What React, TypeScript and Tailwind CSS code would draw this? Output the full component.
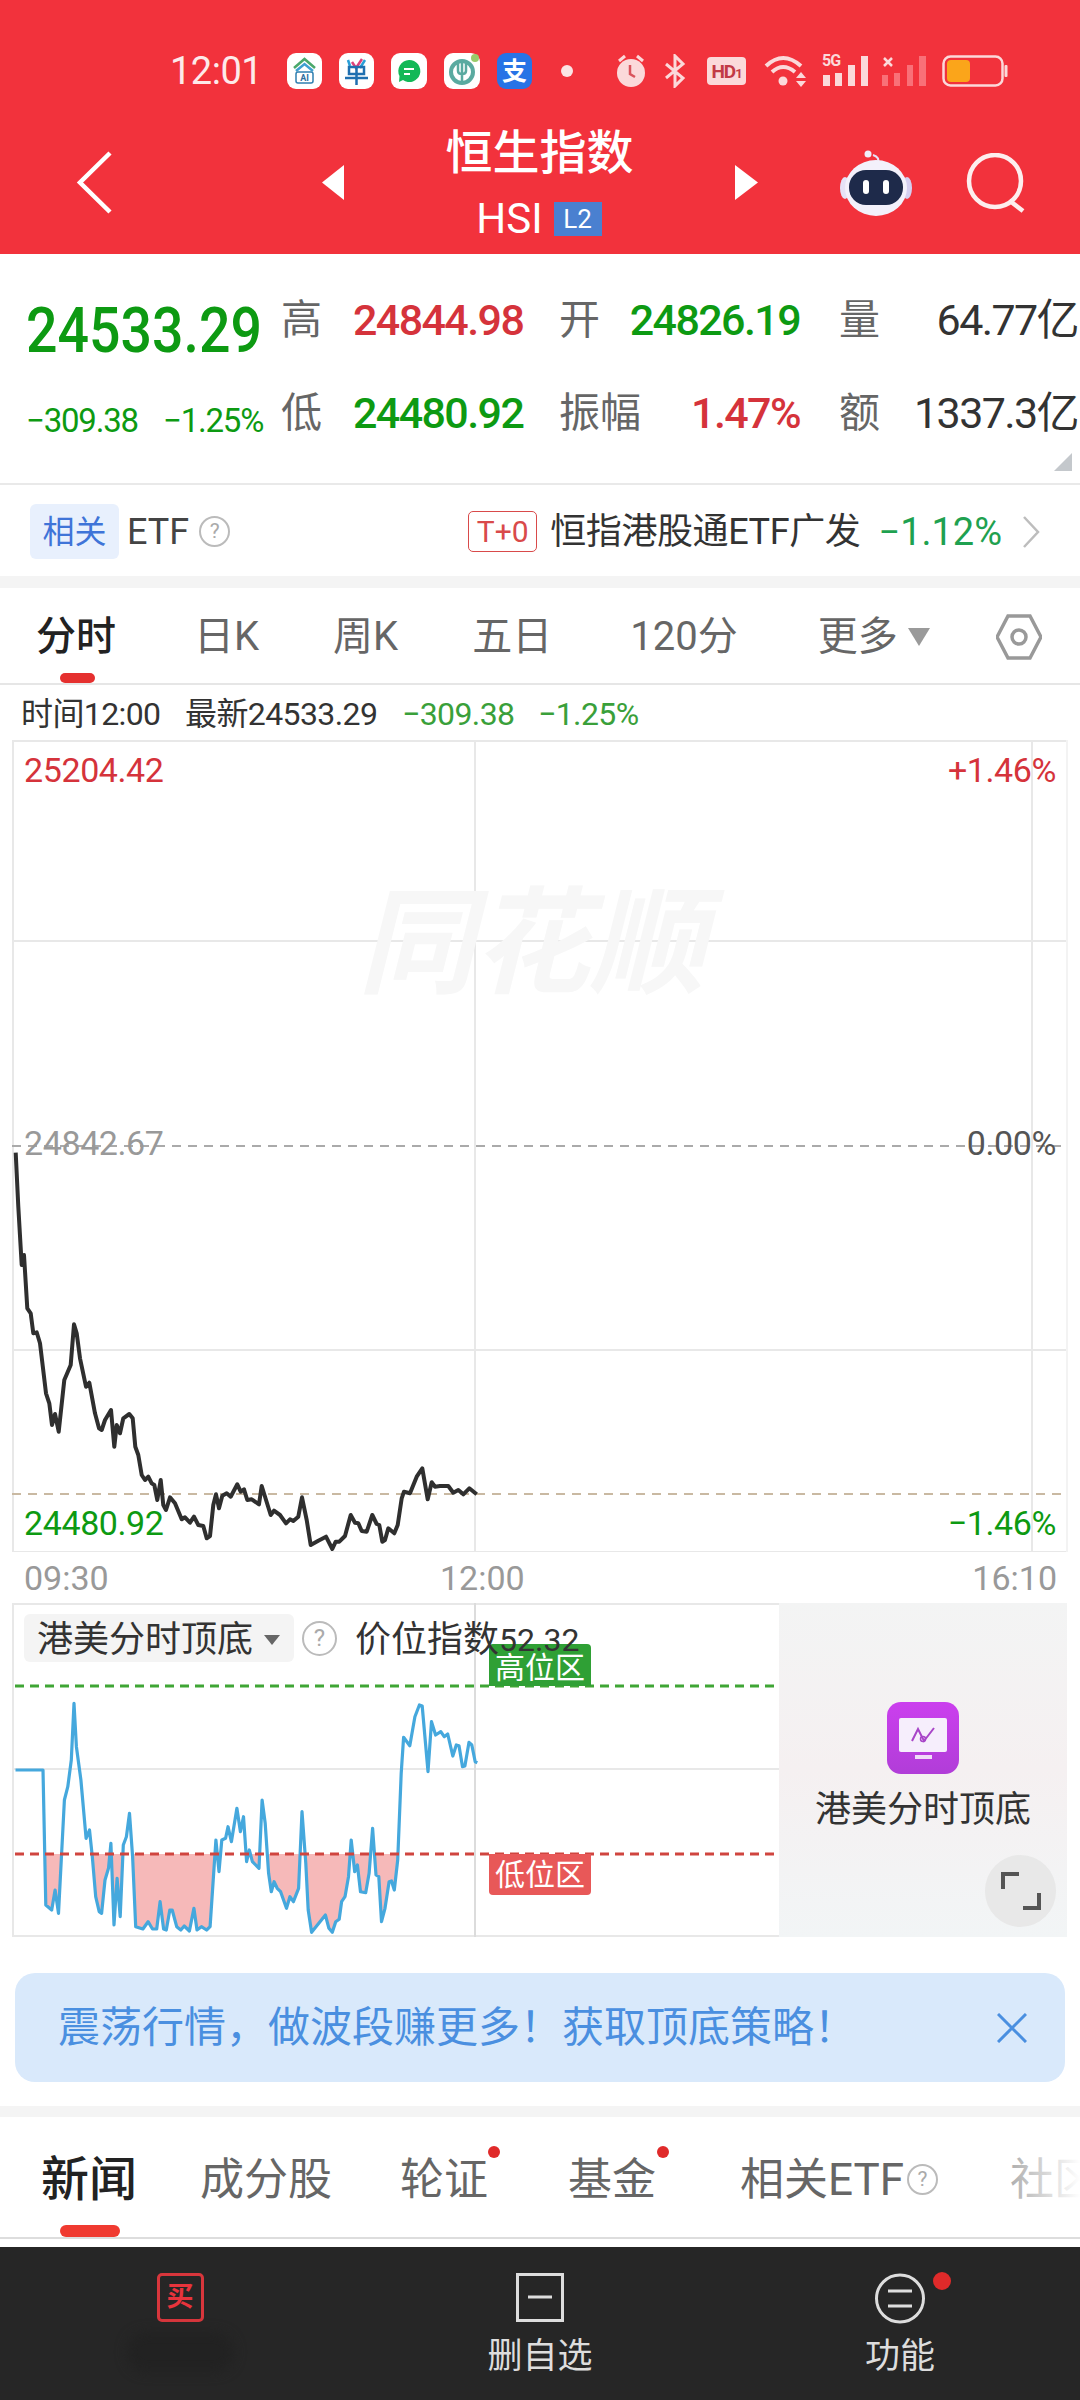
const pricePts = [
  [47,158],[55,320],[65,495],[72,465],[82,625],[92,640],[100,700],[110,697],[120,730],[138,880],[148,910],[156,975],[165,942],[176,995],[193,840],[212,795],[222,673],[230,700],[240,775],[258,860],[268,848],[285,940],[297,985],[305,990],[315,960],[333,930],[343,1040],[350,975],[360,1000],[370,955],[388,942],[398,955],[406,1040],[415,1065],[425,1125],[435,1140],[445,1130],[455,1150],[463,1155],[472,1200],[482,1140],[490,1215],[498,1230],[510,1192],[525,1210],[545,1258],[555,1252],[570,1268],[582,1250],[595,1275],[610,1278],[620,1315],[630,1308],[640,1215],[648,1183],[657,1225],[667,1187],[680,1180],[692,1190],[712,1153],[722,1175],[732,1168],[742,1200],[755,1198],[777,1213],[785,1158],[812,1245],[822,1232],[840,1245],[858,1270],[870,1258],[880,1263],[895,1250],[906,1192],[920,1260],[932,1335],[955,1322],[978,1310],[997,1347],[1007,1325],[1018,1325],[1035,1308],[1052,1245],[1065,1268],[1075,1270],[1085,1293],[1100,1295],[1117,1245],[1130,1272],[1138,1275],[1147,1325],[1155,1320],[1165,1285],[1183,1300],[1193,1275],[1205,1195],[1212,1175],[1230,1180],[1250,1130],[1267,1105],[1283,1198],[1295,1147],[1305,1160],[1320,1158],[1345,1158],[1360,1178],[1375,1170],[1390,1183],[1408,1165],[1430,1183],
];

const indexPts = [
  [45,570],[125,570],[133,975],[150,990],[160,930],[170,1000],[187,660],[197,620],[207,540],[215,370],[222,500],[235,600],[250,775],[260,750],[268,830],[278,950],[288,995],[295,1000],[305,900],[315,865],[322,790],[331,1035],[340,895],[349,1010],[358,795],[367,770],[376,700],[385,830],[394,1040],[415,1047],[430,1025],[443,1047],[455,1047],[465,965],[475,1047],[483,1050],[493,990],[500,990],[513,1040],[525,1050],[535,1038],[550,1053],[563,985],[572,1050],[585,1040],[600,1050],[610,1040],[627,780],[636,875],[644,780],[655,775],[662,740],[672,785],[688,685],[698,755],[707,710],[716,845],[724,810],[733,845],[752,865],[761,660],[770,730],[780,880],[788,935],[796,905],[805,925],[815,935],[832,985],[842,950],[852,965],[867,925],[877,695],[888,850],[895,990],[905,1057],[945,1005],[955,1045],[965,1057],[975,1025],[985,1018],[992,965],[1002,950],[1012,890],[1020,780],[1030,875],[1038,855],[1047,935],[1062,938],[1072,880],[1082,745],[1092,885],[1100,890],[1108,1025],[1118,985],[1130,905],[1137,903],[1145,930],[1155,840],[1165,580],[1172,472],[1190,497],[1205,410],[1218,375],[1226,378],[1243,575],[1253,425],[1265,465],[1280,455],[1290,470],[1300,462],[1315,528],[1325,495],[1333,497],[1343,560],[1350,558],[1362,487],[1370,495],[1380,545],[1386,548],
];

const priceLine = pricePts.map(([x, y]) => `${(x / 3).toFixed(1)},${(y / 3 + 1100).toFixed(1)}`).join(' ');
const indexXY = indexPts.map(([x, y]) => [+(x / 2.904).toFixed(1), +(y / 3 + 1580).toFixed(1)]);
const indexLine = indexXY.map(([x, y]) => `${x},${y}`).join(' ');
const indexFill = `${indexLine} ${indexXY[indexXY.length - 1][0]},1854 ${indexXY[0][0]},1854`;

function AppIcons() {
  return (
    <div className="flex items-center gap-[17px] ml-[27px]">
      <svg width="35" height="36" viewBox="0 0 35 36">
        <rect width="35" height="36" rx="9" fill="#fff" />
        <path d="M7 15 L17.5 6 L28 15" fill="none" stroke="#4aa86a" strokeWidth="2.5" />
        <path d="M9 18 L17.5 11 L26 18" fill="none" stroke="#3f9fd0" strokeWidth="2.5" />
        <rect x="9" y="19" width="17" height="11" rx="2" fill="none" stroke="#2f7fb0" strokeWidth="1.5" />
        <text x="17.5" y="28" textAnchor="middle" fontSize="9" fontWeight="700" fill="#2f6f9f">AI</text>
      </svg>
      <svg width="35" height="36" viewBox="0 0 35 36">
        <rect width="35" height="36" rx="9" fill="#fff" />
        <path d="M9 7 L11 13 M26 7 L21 15" stroke="#2a9fd8" strokeWidth="2.5" fill="none" />
        <path d="M13 9 L17 15 L23 6" stroke="#e0407a" strokeWidth="2.5" fill="none" />
        <path d="M10 14 H25 V21 H10 Z M6 25 H29 M17.5 14 V32" stroke="#1f6fb0" strokeWidth="2.5" fill="none" />
      </svg>
      <svg width="36" height="36" viewBox="0 0 36 36">
        <rect width="36" height="36" rx="9" fill="#fff" />
        <path d="M18 7 A11 11 0 1 1 12 27 L8 29 L8.5 23 A11 11 0 0 1 18 7 Z" fill="#12b857" />
        <path d="M13 16 H23 M13 21 H19" stroke="#fff" strokeWidth="2.2" />
      </svg>
      <svg width="36" height="36" viewBox="0 0 36 36">
        <rect width="36" height="36" rx="9" fill="#fff" />
        <circle cx="18" cy="19" r="11" fill="none" stroke="#5aaaa0" strokeWidth="4" />
        <path d="M14 8 V18 Q14 21 18 21 Q22 21 22 18 V8 M18 8 V30" fill="none" stroke="#5aaaa0" strokeWidth="2.5" />
        <circle cx="31" cy="5" r="4" fill="#9acb6a" />
      </svg>
      <div className="w-[35px] h-[36px] rounded-[9px] bg-[#2773e6] flex items-center justify-center text-white text-[25px] font-bold leading-none">
        支
      </div>
    </div>
  );
}

function SystemIcons() {
  const c = '#fbd9da';
  return (
    <div className="flex items-center">
      <div className="w-[12px] h-[12px] rounded-full bg-[#fbe4e4] ml-[29px]" />
      <svg className="ml-[42px]" width="32" height="34" viewBox="0 0 32 34">
        <circle cx="16" cy="19" r="14" fill={c} />
        <path d="M4 7 L10 2 M28 7 L22 2" stroke={c} strokeWidth="3" />
        <path d="M15 11 V20 L20 23" stroke="#d9545c" strokeWidth="2.5" fill="none" />
      </svg>
      <svg className="ml-[17px]" width="22" height="34" viewBox="0 0 22 34">
        <path d="M2 10 L19 24 L11 32 V2 L19 10 L2 24" fill="none" stroke={c} strokeWidth="3" />
      </svg>
      <div className="ml-[21px] w-[39px] h-[28px] rounded-[4px] bg-[#fbd9da] flex items-center justify-center text-[#c23a45] text-[19px] font-bold leading-none tracking-[-1px]">
        HD<span className="text-[13px] mt-[5px]">1</span>
      </div>
      <svg className="ml-[18px]" width="44" height="32" viewBox="0 0 44 32">
        <path d="M2 11 Q19 -5 37 11" fill="none" stroke={c} strokeWidth="4" />
        <path d="M8 17 Q19 7 31 17" fill="none" stroke={c} strokeWidth="4" />
        <circle cx="19" cy="26" r="4.5" fill={c} />
        <path d="M37 17 L42 23 H32 Z M32 26 H42 L37 32 Z" fill={c} />
      </svg>
      <div className="ml-[14px] relative w-[46px] h-[32px]">
        <span className="absolute left-0 top-[-2px] text-[16px] font-bold leading-none text-[#fbd9da] tracking-[-1px]">5G</span>
        <svg className="absolute inset-0" width="46" height="32" viewBox="0 0 46 32">
          <rect x="1" y="20" width="7" height="11" fill={c} />
          <rect x="13" y="18" width="7" height="13" fill={c} />
          <rect x="26" y="10" width="7" height="21" fill={c} />
          <rect x="39" y="1" width="7" height="30" fill={c} />
        </svg>
      </div>
      <svg className="ml-[14px]" width="44" height="32" viewBox="0 0 44 32">
        <path d="M2 3 L10 11 M10 3 L2 11" stroke={c} strokeWidth="2.5" />
        <g fill="#f97078">
          <rect x="0" y="20" width="6" height="11" />
          <rect x="12" y="18" width="6" height="13" />
          <rect x="25" y="10" width="6" height="21" />
          <rect x="37" y="1" width="7" height="30" />
        </g>
      </svg>
      <svg className="ml-[16px]" width="66" height="32" viewBox="0 0 66 32">
        <rect x="1.5" y="1.5" width="59" height="29" rx="7" fill="none" stroke={c} strokeWidth="2.5" />
        <rect x="5" y="5" width="23" height="22" rx="4" fill="#fba51a" />
        <rect x="62.5" y="10" width="3" height="12" rx="1" fill={c} />
      </svg>
    </div>
  );
}

function RobotIcon() {
  return (
    <svg width="72" height="66" viewBox="0 0 72 66">
      <path d="M38 14 Q40 7 33 5" fill="none" stroke="#e6e2f6" strokeWidth="2" />
      <circle cx="28" cy="4" r="3.5" fill="#f0eefa" />
      <ellipse cx="5" cy="38" rx="5" ry="11" fill="#e6e2f6" />
      <ellipse cx="67" cy="38" rx="5" ry="11" fill="#d5cff0" />
      <ellipse cx="36" cy="38" rx="31" ry="28" fill="#f3f1fb" />
      <rect x="9" y="20" width="54" height="35" rx="17" fill="#1e2a4a" />
      <rect x="23" y="30" width="6" height="14" rx="3" fill="#fff" />
      <rect x="43" y="30" width="6" height="14" rx="3" fill="#fff" />
    </svg>
  );
}

function Header() {
  return (
    <div className="h-[254px] bg-[#f2323c] flex flex-col shrink-0 text-white">
      <div className="flex items-center mt-[53px] h-[36px] pl-[170px]">
        <span className="text-[38px] leading-none text-[#fdeaea] w-[90px] tracking-[-0.5px]">12:01</span>
        <AppIcons />
        <SystemIcons />
      </div>
      <div className="flex items-center mt-[36px] h-[115px] pl-[76px]">
        <svg width="36" height="63" viewBox="0 0 36 63">
          <path d="M34 2 L4 31.5 L34 61" fill="none" stroke="#fff" strokeWidth="4.5" />
        </svg>
        <svg className="ml-[210px]" width="22" height="35" viewBox="0 0 22 35">
          <path d="M22 0 V35 L0 17.5 Z" fill="#fff" />
        </svg>
        <div className="w-[391px] flex flex-col items-center">
          <span className="text-[47px] leading-none font-medium mt-[3px]">恒生指数</span>
          <div className="flex items-center mt-[22px] pr-[1px]">
            <span className="text-[42px] leading-none">HSI</span>
            <span className="ml-[11px] w-[48px] h-[34px] bg-[#4a80d0] text-[26px] leading-none flex items-center justify-center">L2</span>
          </div>
        </div>
        <svg width="23" height="35" viewBox="0 0 23 35">
          <path d="M0 0 V35 L23 17.5 Z" fill="#fff" />
        </svg>
        <div className="ml-[82px]">
          <RobotIcon />
        </div>
        <svg className="ml-[54px]" width="62" height="60" viewBox="0 0 62 60">
          <circle cx="29" cy="28" r="26" fill="none" stroke="#fdeeee" strokeWidth="4.5" />
          <path d="M44 48 L57 58" stroke="#fdeeee" strokeWidth="4.5" />
        </svg>
      </div>
    </div>
  );
}

const numCls = 'text-[43px] leading-none tracking-[-1.6px] font-medium';
const labelCls = 'text-[41px] leading-none text-[#666]';

function Stats() {
  return (
    <div className="h-[231px] shrink-0 relative pl-[26px] border-b-2 border-[#e9e9e9]">
      <div className="flex items-center h-[84px] mt-[24px]">
        <div className="w-[255px] pt-[20px]">
          <span className="block origin-left scale-x-[0.88] text-[63px] leading-none font-medium text-[#0d9a12] whitespace-nowrap">24533.29</span>
        </div>
        <span className={`w-[72px] ${labelCls}`}>高</span>
        <span className={`w-[167px] ${numCls} text-[#d5333b]`}>24844.98</span>
        <div className="ml-[39px] w-[241px] flex items-center justify-between">
          <span className={labelCls}>开</span>
          <span className={`${numCls} text-[#0d9a12]`}>24826.19</span>
        </div>
        <div className="ml-[39px] w-[239px] flex items-center justify-between">
          <span className={labelCls}>量</span>
          <span className={`${numCls} text-[#333] font-normal`}>64.77亿</span>
        </div>
      </div>
      <div className="flex items-center h-[84px] mt-[9px]">
        <div className="w-[255px] flex items-center pt-[14px]">
          <span className="w-[137px] text-[33px] leading-none tracking-[-1.2px] text-[#0d9a12]">−309.38</span>
          <span className="text-[33px] leading-none tracking-[-1.2px] text-[#0d9a12]">−1.25%</span>
        </div>
        <span className={`w-[72px] ${labelCls}`}>低</span>
        <span className={`w-[167px] ${numCls} text-[#0d9a12]`}>24480.92</span>
        <div className="ml-[39px] w-[241px] flex items-center justify-between">
          <span className={labelCls}>振幅</span>
          <span className={`${numCls} text-[#d5333b]`}>1.47%</span>
        </div>
        <div className="ml-[39px] w-[239px] flex items-center justify-between">
          <span className={labelCls}>额</span>
          <span className={`${numCls} text-[#333] font-normal`}>1337.3亿</span>
        </div>
      </div>
      <svg className="absolute right-[8px] bottom-[12px]" width="18" height="18" viewBox="0 0 18 18">
        <path d="M18 0 V18 H0 Z" fill="#c4c8cc" />
      </svg>
    </div>
  );
}

function HelpDot({ size, text }: { size: number; text: number }) {
  return (
    <span
      className="rounded-full border-2 border-[#bbb] text-[#aaa] flex items-center justify-center leading-none shrink-0"
      style={{ width: size, height: size, fontSize: text }}
    >
      ?
    </span>
  );
}

function EtfRow() {
  return (
    <div className="h-[91px] shrink-0 flex items-center pl-[30px] pt-[2px]">
      <span className="w-[89px] h-[55px] rounded-[6px] bg-[#e8f0fd] text-[#3f74d8] text-[32px] leading-none flex items-center justify-center">相关</span>
      <span className="ml-[8px] text-[36px] leading-none text-[#444]">ETF</span>
      <div className="ml-[10px]">
        <HelpDot size={31} text={21} />
      </div>
      <span className="ml-[238px] w-[69px] h-[41px] rounded-[5px] border border-[#d94a4a] text-[#d94a4a] text-[30px] leading-none flex items-center justify-center">T+0</span>
      <span className="ml-[13px] text-[36px] leading-none text-[#333] whitespace-nowrap tracking-[-0.4px]">恒指港股通ETF广发</span>
      <span className="ml-[18px] text-[38px] leading-none text-[#1fa150] whitespace-nowrap">−1.12%</span>
      <svg className="ml-[20px]" width="18" height="32" viewBox="0 0 18 32">
        <path d="M2 1 L16 16 L2 31" fill="none" stroke="#bdbdbd" strokeWidth="2.5" />
      </svg>
    </div>
  );
}

function KlineTabs() {
  return (
    <div className="h-[97px] shrink-0 relative flex items-center pl-[36px] pt-[3px] border-b-2 border-[#e6e6e6] text-[40px] leading-none text-[#666] whitespace-nowrap">
      <span className="text-[#222] font-medium">分时</span>
      <span className="ml-[78px]">日K</span>
      <span className="ml-[74px]">周K</span>
      <span className="ml-[74px]">五日</span>
      <span className="ml-[78px]">120分</span>
      <span className="ml-[80px]">更多</span>
      <svg className="ml-[10px]" width="22" height="18" viewBox="0 0 22 18">
        <path d="M0 0 H22 L11 18 Z" fill="#9a9a9a" />
      </svg>
      <svg className="ml-[66px]" width="46" height="46" viewBox="0 0 46 46">
        <path d="M12 2 H34 L45 23 L34 44 H12 L1 23 Z" fill="none" stroke="#999" strokeWidth="3.5" />
        <circle cx="23" cy="23" r="7" fill="none" stroke="#999" strokeWidth="3.5" />
      </svg>
      <div className="absolute left-[60px] bottom-0 w-[35px] h-[10px] rounded-full bg-[#e5302f]" />
    </div>
  );
}

function InfoRow() {
  return (
    <div className="h-[55px] shrink-0 flex items-center pl-[21px] pt-[2px] text-[32px] leading-none text-[#333] whitespace-nowrap tracking-[-0.6px]">
      <span className="w-[164px]">时间12:00</span>
      <span className="w-[217px]">最新24533.29</span>
      <span className="w-[136px] text-[#3aa03a]">−309.38</span>
      <span className="text-[#3aa03a]">−1.25%</span>
    </div>
  );
}

function PriceChart() {
  return (
    <div className="h-[812px] shrink-0 relative text-[34px] leading-none tracking-[-0.4px]">
      <svg className="absolute inset-0" width="1080" height="812" viewBox="0 740 1080 812">
        <g stroke="#e8e8e8" strokeWidth="2" fill="none">
          <path d="M12 741 H1067 M12 941 H1067 M12 1350 H1067 M12 1552 H1067" />
          <path d="M13 740 V1552 M475 740 V1552 M1032 740 V1552" />
          <path d="M1067 740 V1552" stroke="#f3f3f3" />
        </g>
        <path d="M12 1146 H1062" stroke="#aaa" strokeWidth="2" strokeDasharray="9 7" />
        <path d="M12 1494 H1062" stroke="#c9b9a2" strokeWidth="2" strokeDasharray="9 7" />
        <polyline points={priceLine} fill="none" stroke="#2f2f2f" strokeWidth="4" strokeLinejoin="round" />
      </svg>
      <span className="absolute left-[358px] top-[146px] text-[116px] italic font-bold text-[#f7f7f7]">同花顺</span>
      <span className="absolute left-[24px] top-[13px] text-[#d5333b]">25204.42</span>
      <span className="absolute right-[24px] top-[13px] text-[#d5333b]">+1.46%</span>
      <span className="absolute left-[24px] top-[386px] text-[#999]">24842.67</span>
      <span className="absolute right-[24px] top-[386px] text-[#555]">0.00%</span>
      <span className="absolute left-[24px] top-[766px] text-[#0d9a12]">24480.92</span>
      <span className="absolute right-[24px] top-[766px] text-[#0d9a12]">−1.46%</span>
    </div>
  );
}

function TimeAxis() {
  return (
    <div className="h-[51px] shrink-0 flex items-center pl-[24px] pr-[23px] text-[34px] leading-none text-[#999]">
      <span className="w-[416px]">09:30</span>
      <span>12:00</span>
      <span className="ml-auto">16:10</span>
    </div>
  );
}

function IndicatorPanel() {
  return (
    <div className="h-[334px] shrink-0 flex">
      <div className="w-[779px] relative">
        <svg className="absolute inset-0" width="779" height="334" viewBox="0 1603 779 334">
          <defs>
            <clipPath id="lowZone">
              <rect x="0" y="1854" width="779" height="83" />
            </clipPath>
          </defs>
          <g stroke="#e8e8e8" strokeWidth="2" fill="none">
            <path d="M12 1604 H779 M12 1769 H779 M12 1936 H779 M13 1603 V1937" />
            <path d="M475 1603 V1937" stroke="#dcdcdc" />
          </g>
          <polygon points={indexFill} fill="#f6b9b9" clipPath="url(#lowZone)" />
          <polyline points={indexLine} fill="none" stroke="#45a8dd" strokeWidth="3.2" strokeLinejoin="round" />
          <path d="M15 1686 H775" stroke="#3fa535" strokeWidth="3" strokeDasharray="9 6" />
          <path d="M15 1854 H775" stroke="#d0453f" strokeWidth="3" strokeDasharray="9 6" />
        </svg>
        <div className="relative z-10 flex items-center pt-[11px] pl-[24px] leading-none whitespace-nowrap">
          <div className="w-[270px] h-[48px] rounded-[6px] bg-[#f4f4f4] flex items-center pl-[13px] pt-[3px] text-[36px] text-[#333]">
            <span>港美分时顶底</span>
            <svg className="ml-[11px]" width="16" height="10" viewBox="0 0 16 10">
              <path d="M0 0 H16 L8 10 Z" fill="#666" />
            </svg>
          </div>
          <div className="ml-[8px]">
            <HelpDot size={35} text={24} />
          </div>
          <span className="ml-[18px] mt-[4px] text-[36px] text-[#333]">价位指数</span>
          <span className="mt-[4px] text-[32px] text-[#333]">52.32</span>
        </div>
        <span className="absolute left-[489px] top-[41px] w-[102px] h-[42px] rounded-t-[4px] bg-[#2fa035] text-white text-[30px] leading-none flex items-center justify-center pt-[6px]">高位区</span>
        <span className="absolute left-[489px] top-[251px] w-[102px] h-[41px] rounded-b-[4px] bg-[#e85858] text-white text-[30px] leading-none flex items-center justify-center">低位区</span>
      </div>
      <div className="w-[288px] relative flex flex-col items-center pt-[99px] bg-gradient-to-b from-[#f3f4f4] via-[#f5f0f1] to-[#f2f5f6]">
        <div className="w-[72px] h-[72px] rounded-[14px] bg-gradient-to-b from-[#cb3fee] to-[#b13dd8] flex flex-col items-center pt-[16px]">
          <div className="w-[48px] h-[34px] rounded-[2px] bg-[#f6eefc] flex items-center justify-center">
            <svg width="26" height="18" viewBox="0 0 26 18">
              <path d="M2 15 L8 3 L14 15 L24 2" fill="none" stroke="#a845c8" strokeWidth="2" />
              <circle cx="13" cy="13" r="2.5" fill="none" stroke="#a845c8" strokeWidth="1.5" />
            </svg>
          </div>
          <div className="mt-[3px] w-[17px] h-[4px] bg-[#f0dcf8]" />
        </div>
        <span className="mt-[18px] text-[36px] leading-none text-[#333] whitespace-nowrap">港美分时顶底</span>
        <div className="absolute left-[206px] top-[252px] w-[71px] h-[72px] rounded-full bg-[#e8e8e8] flex items-center justify-center">
          <svg width="40" height="38" viewBox="0 0 40 38">
            <path d="M2 17 V2 H18 M22 36 H38 V21" fill="none" stroke="#555" strokeWidth="4" />
          </svg>
        </div>
      </div>
    </div>
  );
}

function PromoBanner() {
  return (
    <div className="mt-[36px] mx-[15px] h-[109px] shrink-0 rounded-[20px] bg-[#d9e9fb] flex items-center pl-[43px] text-[42px] leading-none text-[#4a8fe0] whitespace-nowrap">
      <span>{'震荡行情\uFF0C做波段赚更多\uFF01获取顶底策略\uFF01'}</span>
      <svg className="ml-[141px]" width="30" height="30" viewBox="0 0 30 30">
        <path d="M1 1 L29 29 M29 1 L1 29" stroke="#4a8fe0" strokeWidth="3" />
      </svg>
    </div>
  );
}

function NewsTabs() {
  return (
    <div className="h-[122px] shrink-0 relative overflow-hidden flex items-center pl-[41px] pt-[5px] border-b-2 border-[#ddd] text-[44px] leading-none text-[#666] whitespace-nowrap">
      <span className="text-[48px] font-medium text-[#222]">新闻</span>
      <span className="ml-[63px]">成分股</span>
      <span className="ml-[68px] relative">
        轮证
        <span className="absolute left-[88px] top-[-12px] w-[12px] h-[12px] rounded-full bg-[#e02a2a]" />
      </span>
      <span className="ml-[80px] relative">
        基金
        <span className="absolute left-[89px] top-[-12px] w-[12px] h-[12px] rounded-full bg-[#e02a2a]" />
      </span>
      <span className="ml-[84px]">相关ETF</span>
      <div className="ml-[3px]">
        <HelpDot size={31} text={21} />
      </div>
      <span className="ml-[72px]">社区</span>
      <div className="absolute right-0 top-0 bottom-0 w-[80px] bg-gradient-to-r from-white/40 to-white" />
      <div className="absolute left-[60px] bottom-0 w-[60px] h-[12px] rounded-full bg-[#f03a30]" />
    </div>
  );
}

function BottomBar() {
  return (
    <div className="mt-[8px] flex-1 bg-[#262626] grid grid-cols-3 text-[35px] leading-none text-[#ddd] pt-[26px]">
      <div className="flex flex-col items-center">
        <div className="w-[47px] h-[49px] rounded-[5px] border-[3px] border-[#d8363c] text-[#e8343c] text-[27px] font-bold flex items-center justify-center">买</div>
        <div className="mt-[10px] w-[107px] h-[40px] rounded-full bg-[#222222] blur-[6px]" />
      </div>
      <div className="flex flex-col items-center">
        <svg width="48" height="49" viewBox="0 0 48 49">
          <rect x="1.5" y="1.5" width="45" height="46" fill="none" stroke="#ddd" strokeWidth="3" />
          <path d="M12 24 H36" stroke="#ddd" strokeWidth="3" />
        </svg>
        <span className="mt-[17px]">删自选</span>
      </div>
      <div className="flex flex-col items-center relative">
        <svg width="50" height="51" viewBox="0 0 50 51">
          <circle cx="25" cy="25.5" r="23.5" fill="none" stroke="#ddd" strokeWidth="3" />
          <path d="M13 18 H37 M13 33 H37" stroke="#ddd" strokeWidth="3" />
        </svg>
        <span className="mt-[15px]">功能</span>
        <span className="absolute left-[213px] top-[-1px] w-[18px] h-[18px] rounded-full bg-[#e02a2a]" />
      </div>
    </div>
  );
}

export default function App() {
  return (
    <div className="w-[1080px] h-[2400px] overflow-hidden bg-white flex flex-col font-[family-name:Roboto,'Noto_Sans_CJK_SC',sans-serif]">
      <Header />
      <Stats />
      <EtfRow />
      <div className="h-[12px] shrink-0 bg-[#f4f4f4]" />
      <KlineTabs />
      <InfoRow />
      <PriceChart />
      <TimeAxis />
      <IndicatorPanel />
      <PromoBanner />
      <div className="mt-[24px] h-[11px] shrink-0 bg-[#f4f4f4]" />
      <NewsTabs />
      <BottomBar />
    </div>
  );
}
